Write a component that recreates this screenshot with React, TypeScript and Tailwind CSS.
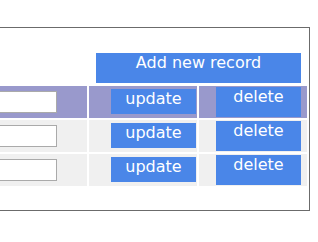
import React from 'react';

const rows = [
  { bg: 'bg-[#9999cc]' },
  { bg: 'bg-[#f0f0f0]' },
  { bg: 'bg-[#f0f0f0]' },
];

export default function App() {
  return (
    <div className="w-[318px] h-[242px] overflow-hidden bg-white pt-[27px] font-['DejaVu_Sans',sans-serif] text-[16px] leading-[normal]">
      <div className="ml-[-31px] w-[341px] border border-[#6b6b6b] pt-[25px] pb-[22px] flex flex-col items-end">
        <button className="mr-[8px] w-[205px] h-[30px] flex justify-center items-start bg-[#4a86e8] text-white">
          Add new record
        </button>
        <div className="mt-px p-[2px] grid grid-cols-[108px_108px_108px] auto-rows-[32px] gap-[2px]">
          {rows.map((row, i) => (
            <React.Fragment key={i}>
              <div className={`${row.bg} flex justify-end items-start pt-[5px] pr-[30px]`}>
                <input
                  type="text"
                  className="w-[110px] h-[22px] bg-white border border-[#aaaaaa]"
                />
              </div>
              <div className={`${row.bg} flex justify-end items-start pt-[3px] pr-px`}>
                <button className="w-[85px] h-[25px] flex justify-center items-start bg-[#4a86e8] text-white">
                  update
                </button>
              </div>
              <div className={`${row.bg} flex justify-end items-start pt-px pr-[6px]`}>
                <button className="w-[85px] h-[30px] flex justify-center items-start bg-[#4a86e8] text-white">
                  delete
                </button>
              </div>
            </React.Fragment>
          ))}
        </div>
      </div>
    </div>
  );
}
